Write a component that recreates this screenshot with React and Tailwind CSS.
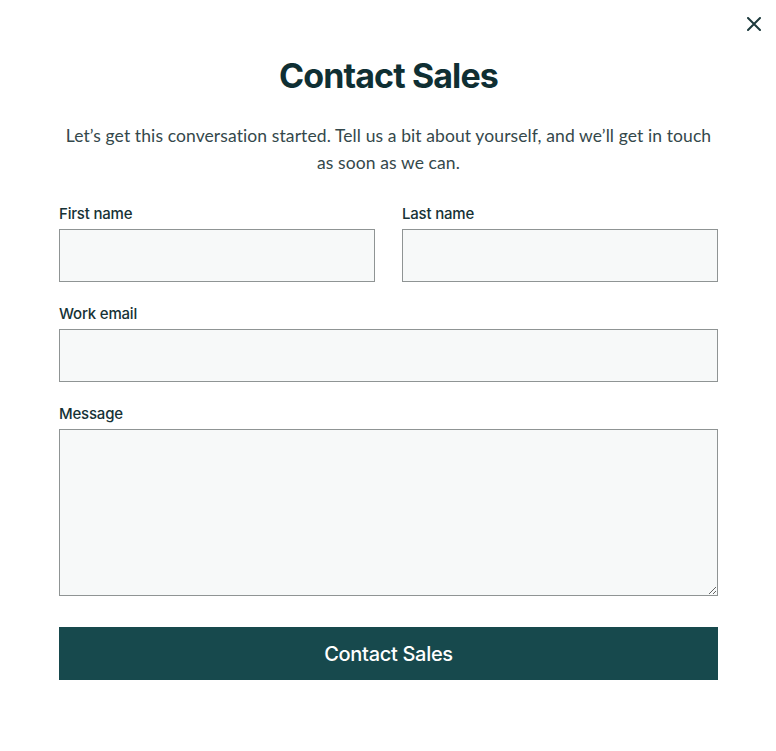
import React from 'react';

function Field({ label, className = '', children }) {
  return (
    <label className={`flex flex-col ${className}`}>
      <span className="text-[15px] leading-[20px] font-medium text-[#163236] mb-[5px] tracking-[-0.2px]">{label}</span>
      {children}
    </label>
  );
}

const inputCls =
  'w-full h-[53px] bg-[#f7f9f9] border border-[#8f9494] outline-none px-3 text-[16px] text-[#163236]';

export default function App() {
  return (
    <div className="min-h-screen bg-white relative" style={{ fontFamily: 'Inter, "Noto Sans", sans-serif' }}>
      {/* Close button */}
      <button className="absolute top-[17px] right-[15px] w-[14px] h-[14px] text-[#1d3a3d]" aria-label="Close">
        <svg viewBox="0 0 14 14" width="14" height="14" fill="none" stroke="currentColor" strokeWidth="2" strokeLinecap="round">
          <path d="M1 1L13 13M13 1L1 13" />
        </svg>
      </button>

      <div className="pl-[59px] pr-[58px] pt-[52px]">
        <h1 className="text-center text-[34px] leading-[48px] font-bold text-[#0f2f33] tracking-[-0.9px]">Contact Sales</h1>
        <p
          className="mt-[22px] mx-[3px] text-center text-[17.5px] leading-[27px] tracking-[0.1px] text-[#34484b]"
          style={{ fontFamily: 'Lato, sans-serif' }}
        >
          Let’s get this conversation started. Tell us a bit about yourself, and we’ll get in touch as soon as we can.
        </p>

        <form className="mt-[28px] flex flex-col" onSubmit={(e) => e.preventDefault()}>
          <div className="grid grid-cols-2 gap-[27px]">
            <Field label="First name">
              <input className={inputCls} />
            </Field>
            <Field label="Last name">
              <input className={inputCls} />
            </Field>
          </div>
          <Field label="Work email" className="mt-[22px]">
            <input type="email" className={inputCls} />
          </Field>
          <Field label="Message" className="mt-[22px]">
            <textarea className="w-full h-[167px] bg-[#f7f9f9] border border-[#8f9494] outline-none p-3 text-[16px] text-[#163236] block" />
          </Field>
          <button
            type="submit"
            className="mt-[31px] h-[53px] w-full bg-[#17494d] text-white text-[20px] font-medium tracking-[-0.3px]"
          >
            Contact Sales
          </button>
        </form>
      </div>
    </div>
  );
}
